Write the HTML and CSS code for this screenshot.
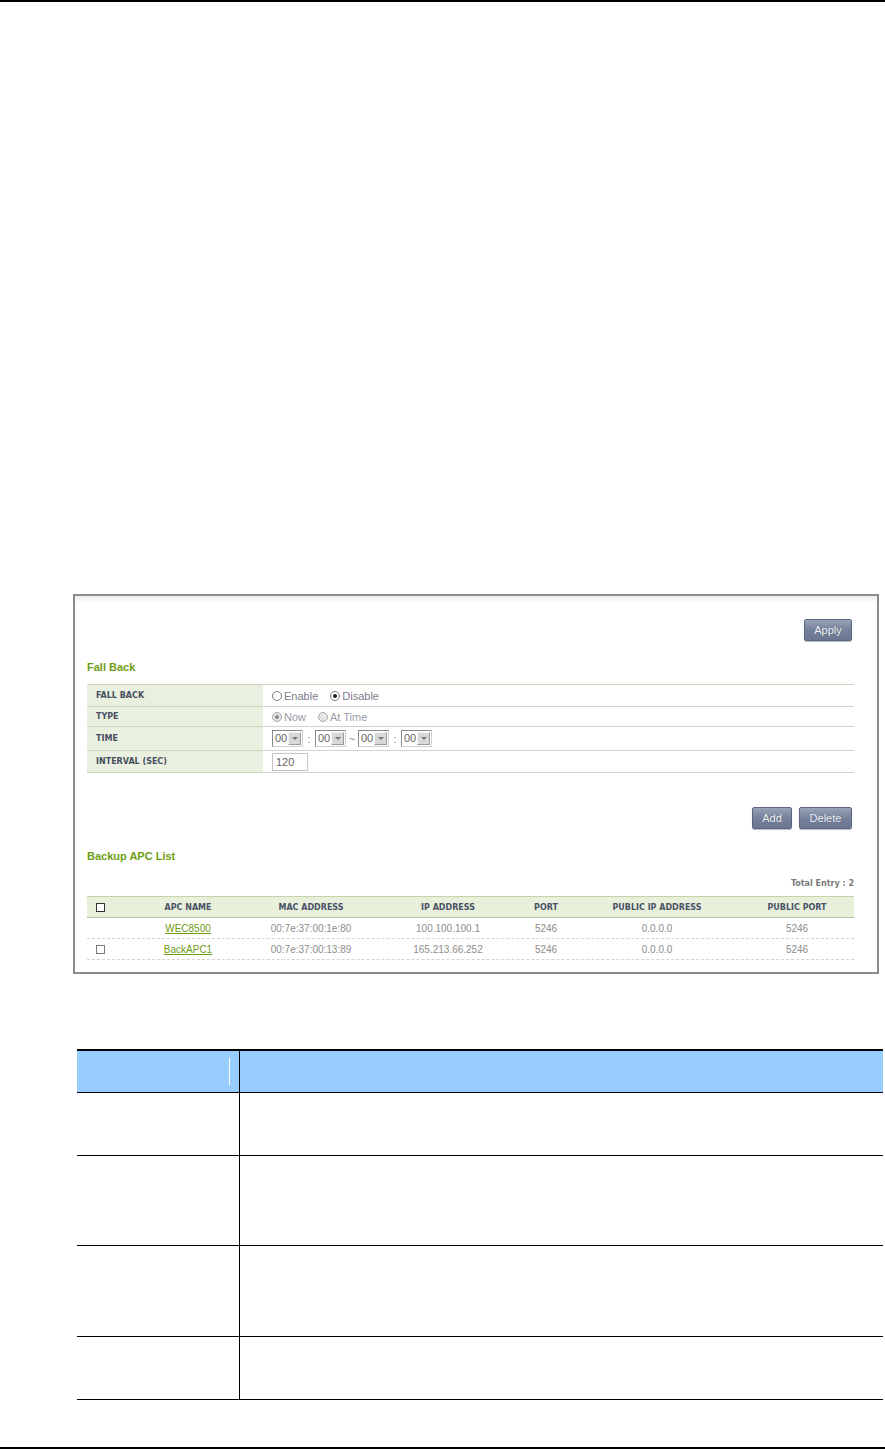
FILE: index.html
```html
<!DOCTYPE html>
<html lang="en">

<head>
  <meta charset="UTF-8">
  <meta name="viewport" content="width=device-width, initial-scale=1.0">
  <title>Fall Back</title>
  <link rel="stylesheet" href="styles.css">
</head>

<body>
  <div class="page-rule top"></div>

  <div class="shot">
    <div class="toolbar">
      <button class="btn btn-apply" type="button">Apply</button>
    </div>

    <div class="section-title">Fall Back</div>

    <div class="form">
      <div class="form-row h22">
        <div class="form-label">FALL BACK</div>
        <div class="form-value">
          <span class="radio"></span><span class="opt">Enable</span>
          <span class="radio checked"></span><span class="opt">Disable</span>
        </div>
      </div>
      <div class="form-row h20">
        <div class="form-label">TYPE</div>
        <div class="form-value muted">
          <span class="radio checked disabled"></span><span class="opt">Now</span>
          <span class="radio disabled"></span><span class="opt">At Time</span>
        </div>
      </div>
      <div class="form-row h24">
        <div class="form-label">TIME</div>
        <div class="form-value">
          <span class="select"><span class="select-text">00</span><span class="select-btn"></span></span>
          <span class="sep">:</span>
          <span class="select"><span class="select-text">00</span><span class="select-btn"></span></span>
          <span class="sep">~</span>
          <span class="select"><span class="select-text">00</span><span class="select-btn"></span></span>
          <span class="sep">:</span>
          <span class="select"><span class="select-text">00</span><span class="select-btn"></span></span>
        </div>
      </div>
      <div class="form-row h22">
        <div class="form-label">INTERVAL (SEC)</div>
        <div class="form-value">
          <span class="text-input">120</span>
        </div>
      </div>
    </div>

    <div class="toolbar toolbar-list">
      <button class="btn btn-add" type="button">Add</button>
      <button class="btn btn-delete" type="button">Delete</button>
    </div>

    <div class="section-title title-list">Backup APC List</div>
    <div class="total">Total Entry : 2</div>

    <div class="list">
      <div class="list-row list-head">
        <div class="cell cell-cb"><span class="checkbox dark"></span></div>
        <div class="cell">APC NAME</div>
        <div class="cell">MAC ADDRESS</div>
        <div class="cell">IP ADDRESS</div>
        <div class="cell">PORT</div>
        <div class="cell">PUBLIC IP ADDRESS</div>
        <div class="cell cell-last">PUBLIC PORT</div>
      </div>
      <div class="list-row">
        <div class="cell cell-cb"></div>
        <div class="cell"><a class="link" href="#">WEC8500</a></div>
        <div class="cell">00:7e:37:00:1e:80</div>
        <div class="cell">100.100.100.1</div>
        <div class="cell">5246</div>
        <div class="cell">0.0.0.0</div>
        <div class="cell cell-last">5246</div>
      </div>
      <div class="list-row">
        <div class="cell cell-cb"><span class="checkbox"></span></div>
        <div class="cell"><a class="link" href="#">BackAPC1</a></div>
        <div class="cell">00:7e:37:00:13:89</div>
        <div class="cell">165.213.66.252</div>
        <div class="cell">5246</div>
        <div class="cell">0.0.0.0</div>
        <div class="cell cell-last">5246</div>
      </div>
    </div>
  </div>

  <div class="desc">
    <div class="desc-row desc-head">
      <div class="desc-cell"><span class="head-mark"></span></div>
      <div class="desc-cell"></div>
    </div>
    <div class="desc-row r63">
      <div class="desc-cell"></div>
      <div class="desc-cell"></div>
    </div>
    <div class="desc-row r90">
      <div class="desc-cell"></div>
      <div class="desc-cell"></div>
    </div>
    <div class="desc-row r91">
      <div class="desc-cell"></div>
      <div class="desc-cell"></div>
    </div>
    <div class="desc-row r63">
      <div class="desc-cell"></div>
      <div class="desc-cell"></div>
    </div>
  </div>

  <div class="page-rule bottom"></div>
</body>

</html>
```

FILE: styles.css
```css
html,
body {
  margin: 0;
  padding: 0;
  background: #fff;
}

body {
  font-family: 'Liberation Sans', Arial, sans-serif;
  font-size: 11px;
  color: #777;
  height: 1449px;
  overflow: hidden;
}

.page-rule {
  width: 100%;
  background: #000;
}

.page-rule.top {
  height: 2px;
}

.page-rule.bottom {
  height: 3px;
  margin-top: 47px;
}

/* Screenshot frame */
.shot {
  box-sizing: border-box;
  width: 806px;
  margin: 592px 0 0 73px;
  padding: 23px 23px 12px 12px;
  border: 2px solid #8c8c8c;
  background: linear-gradient(#ececec, #fff 7px);
}

.toolbar {
  display: flex;
  justify-content: flex-end;
  gap: 7px;
  height: 22px;
  padding-right: 2px;
}

.toolbar-list {
  margin-top: 34px;
}

.btn {
  box-sizing: border-box;
  height: 22px;
  padding: 0;
  border: 1px solid #5c667e;
  border-radius: 2px;
  background: linear-gradient(#98a2b8, #747f99 55%, #6b7690);
  color: #f2f4fa;
  font-family: 'Liberation Sans', Arial, sans-serif;
  font-size: 11px;
  text-shadow: 0 0 1px #4c566c;
  box-shadow: 0 1px 1px #b9bcc4;
}

.btn-apply {
  width: 48px;
}

.btn-add {
  width: 40px;
}

.btn-delete {
  width: 53px;
}

.section-title {
  margin: 19px 0 10px;
  line-height: 14px;
  font-size: 11px;
  font-weight: bold;
  color: #6e9d14;
}

.title-list {
  margin: 20px 0 0;
}

/* Fall back form */
.form {
  border-top: 1px solid #cbd5bd;
}

.form-row {
  box-sizing: border-box;
  display: grid;
  grid-template-columns: 176px 1fr;
}

.h20 {
  height: 20px;
}

.h22 {
  height: 22px;
}

.h24 {
  height: 24px;
}

.form-label,
.form-value {
  display: flex;
  align-items: center;
  padding-left: 9px;
}

.form-label {
  background: #e9f0df;
  border-bottom: 1px solid #cbd7ba;
  font-family: 'DejaVu Sans', Verdana, sans-serif;
  font-size: 8px;
  font-weight: bold;
  color: #474f60;
}

.form-value {
  border-bottom: 1px solid #d2d2d2;
  color: #7c7c8c;
}

.form-value.muted {
  color: #9a9aa4;
}

.radio {
  box-sizing: border-box;
  display: inline-flex;
  align-items: center;
  justify-content: center;
  width: 10px;
  height: 10px;
  border: 1px solid #7c7c7c;
  border-radius: 50%;
  background: #fff;
}

.radio.checked::before {
  content: '';
  width: 4px;
  height: 4px;
  border-radius: 50%;
  background: #222;
}

.radio.disabled {
  border-color: #a8a8a8;
  background: #e6e6e6;
}

.radio.checked.disabled::before {
  background: #8a8a8a;
}

.opt {
  margin: 0 12px 0 2px;
}

.select {
  box-sizing: border-box;
  display: inline-flex;
  width: 31px;
  height: 17px;
  border: 1px solid #8a8a8a;
  border-right-color: #d0d0d0;
  border-bottom-color: #d0d0d0;
  background: #fff;
}

.select-text {
  flex: 1;
  padding-left: 2px;
  line-height: 15px;
  font-size: 11px;
  color: #666;
}

.select-btn {
  box-sizing: border-box;
  width: 13px;
  margin: 1px;
  border: 1px solid #f4f4f4;
  border-right-color: #9a9a9a;
  border-bottom-color: #9a9a9a;
  background: #d8d8d8;
  display: flex;
  align-items: center;
  justify-content: center;
}

.select-btn::before {
  content: '';
  border-left: 3px solid transparent;
  border-right: 3px solid transparent;
  border-top: 3px solid #777;
}

.sep {
  width: 12px;
  text-align: center;
  color: #888;
}

.text-input {
  box-sizing: border-box;
  display: inline-block;
  width: 36px;
  height: 18px;
  padding-left: 3px;
  border: 1px solid #c4c4c4;
  line-height: 16px;
  color: #666;
}

/* Backup list */
.total {
  margin: 14px 0 5px;
  line-height: 14px;
  text-align: right;
  font-family: 'DejaVu Sans', Verdana, sans-serif;
  font-size: 8px;
  font-weight: bold;
  color: #7a7a7a;
}

.list-row {
  box-sizing: border-box;
  display: grid;
  grid-template-columns: 33px 136px 110px 164px 32px 190px 102px;
  height: 21px;
  border-bottom: 1px dashed #d4d4d4;
  font-size: 10px;
  color: #8c8c8c;
}

.list-head {
  height: 22px;
  border-top: 1px solid #c3d3aa;
  border-bottom: 1px solid #b6c89b;
  background: #e8f0dc;
  font-family: 'DejaVu Sans', Verdana, sans-serif;
  font-size: 8px;
  font-weight: bold;
  color: #4a5266;
}

.cell {
  display: flex;
  align-items: center;
  justify-content: center;
  white-space: nowrap;
}

.cell-cb {
  justify-content: flex-start;
  padding-left: 9px;
}

.cell-last {
  padding-right: 12px;
}

.checkbox {
  box-sizing: border-box;
  width: 9px;
  height: 9px;
  border: 1px solid #7a7a7a;
  background: #fff;
}

.checkbox.dark {
  border-color: #333;
}

.link {
  color: #6e9d14;
  text-decoration: underline;
}

/* Description table */
.desc {
  width: 806px;
  margin: 75px 0 0 77px;
  border-top: 2px solid #000;
}

.desc-row {
  box-sizing: border-box;
  display: grid;
  grid-template-columns: 163px 1fr;
  border-bottom: 1px solid #000;
}

.desc-head {
  height: 42px;
  background: #99ccff;
}

.r63 {
  height: 63px;
}

.r90 {
  height: 90px;
}

.r91 {
  height: 91px;
}

.desc-cell:first-child {
  box-sizing: border-box;
  border-right: 1px solid #000;
}

.desc-head .desc-cell:first-child {
  display: flex;
  align-items: center;
  justify-content: flex-end;
  padding-right: 9px;
}

.head-mark {
  width: 0;
  height: 27px;
  border-right: 1px solid #fff;
}
```
